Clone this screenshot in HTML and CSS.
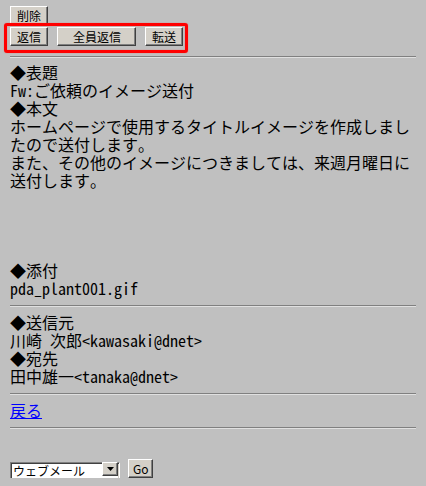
FILE: index.html
```html
<!DOCTYPE html>
<html lang="ja">
<head>
<meta charset="utf-8">
<title>メール詳細</title>
<link rel="stylesheet" href="styles.css">
</head>
<body>
<div class="actions">
  <button class="btn">削除</button>
  <div class="reply-row">
    <button class="btn">返信</button>
    <button class="btn btn-wide">全員返信</button>
    <button class="btn">転送</button>
    <span class="highlight"></span>
  </div>
</div>
<hr class="rule rule-top">
<div class="msg">
  <div class="label">◆表題</div>
  <div>Fw:ご依頼のイメージ送付</div>
  <div class="label">◆本文</div>
  <div class="body-text">ホームページで使用するタイトルイメージを作成しましたので送付します。<br>また、その他のイメージにつきましては、来週月曜日に送付します。</div>
  <div class="label">◆添付</div>
  <div>pda_plant001.gif</div>
</div>
<hr class="rule">
<div class="msg">
  <div class="label">◆送信元</div>
  <div>川崎 次郎&lt;kawasaki@dnet&gt;</div>
  <div class="label">◆宛先</div>
  <div>田中雄一&lt;tanaka@dnet&gt;</div>
</div>
<hr class="rule">
<div class="msg"><a class="back" href="#">戻る</a></div>
<hr class="rule">
<form class="nav" onsubmit="return false">
  <div class="select-wrap">
    <select class="select">
      <option>ウェブメール</option>
    </select>
    <span class="select-arrow"><svg width="7" height="4" viewBox="0 0 7 4"><path d="M0 0H7L3.5 4Z" fill="#000"/></svg></span>
  </div>
  <button class="btn btn-go" type="submit">Go</button>
</form>
</body>
</html>
```
FILE: styles.css
```css
html { background: #c0c0c0; }
body {
  margin: 0;
  padding: 6px 10px 0;
  background: #c0c0c0;
  color: #000;
  font-family: "Noto Sans Mono CJK JP", "Noto Sans CJK JP", monospace;
  font-size: 16px;
  line-height: 18px;
}
.actions { display: flex; flex-direction: column; align-items: flex-start; gap: 2px; }
.btn {
  font-family: "Noto Sans CJK JP", sans-serif;
  font-size: 12px;
  line-height: 15px;
  height: 19px;
  padding: 0 6px;
  margin: 0;
  background: #d4d0c8;
  color: #000;
  border: 1px solid;
  border-color: #fff #404040 #404040 #fff;
  box-shadow: inset -1px -1px 0 #808080;
  border-radius: 0;
}
.btn-wide { padding: 0 14px 0 15px; }
.reply-row { position: relative; display: flex; gap: 9px; }
.highlight {
  position: absolute;
  left: -6px; top: -4px; right: -5px; bottom: -7px;
  border: 3px solid #ff0000;
  border-radius: 3px;
  box-shadow: 0 0 1px #ff4040, inset 0 0 1px #ff4040;
  pointer-events: none;
}
.rule {
  margin: 8px 0 6px;
  height: 0;
  border: 0;
  border-top: 1px solid #808080;
  border-bottom: 1px solid #e0e0e0;
}
.rule-top { margin: 10px 0 5px; }
.body-text { margin-bottom: 72px; }
.back { color: #0000ff; text-decoration: underline; }
.nav { display: flex; align-items: center; gap: 8px; margin-top: 30px; }
.select-wrap { position: relative; width: 110px; height: 18px; }
.select {
  appearance: none;
  -webkit-appearance: none;
  width: 110px;
  height: 18px;
  margin: 0;
  padding: 0 0 0 2px;
  font-family: "Noto Sans CJK JP", sans-serif;
  font-size: 12px;
  line-height: 14px;
  color: #000;
  background: #fff;
  border: 1px solid;
  border-color: #808080 #fff #fff #808080;
  box-shadow: inset 1px 1px 0 #404040, inset -1px -1px 0 #d4d0c8;
  border-radius: 0;
}
.select-arrow {
  position: absolute;
  right: 2px; top: 2px;
  width: 14px; height: 12px;
  display: flex; align-items: center; justify-content: center;
  background: #d4d0c8;
  border: 1px solid;
  border-color: #fff #404040 #404040 #fff;
  box-shadow: inset -1px -1px 0 #808080;
  pointer-events: none;
}
.btn-go { padding: 0 4px; width: 25px; }
```
